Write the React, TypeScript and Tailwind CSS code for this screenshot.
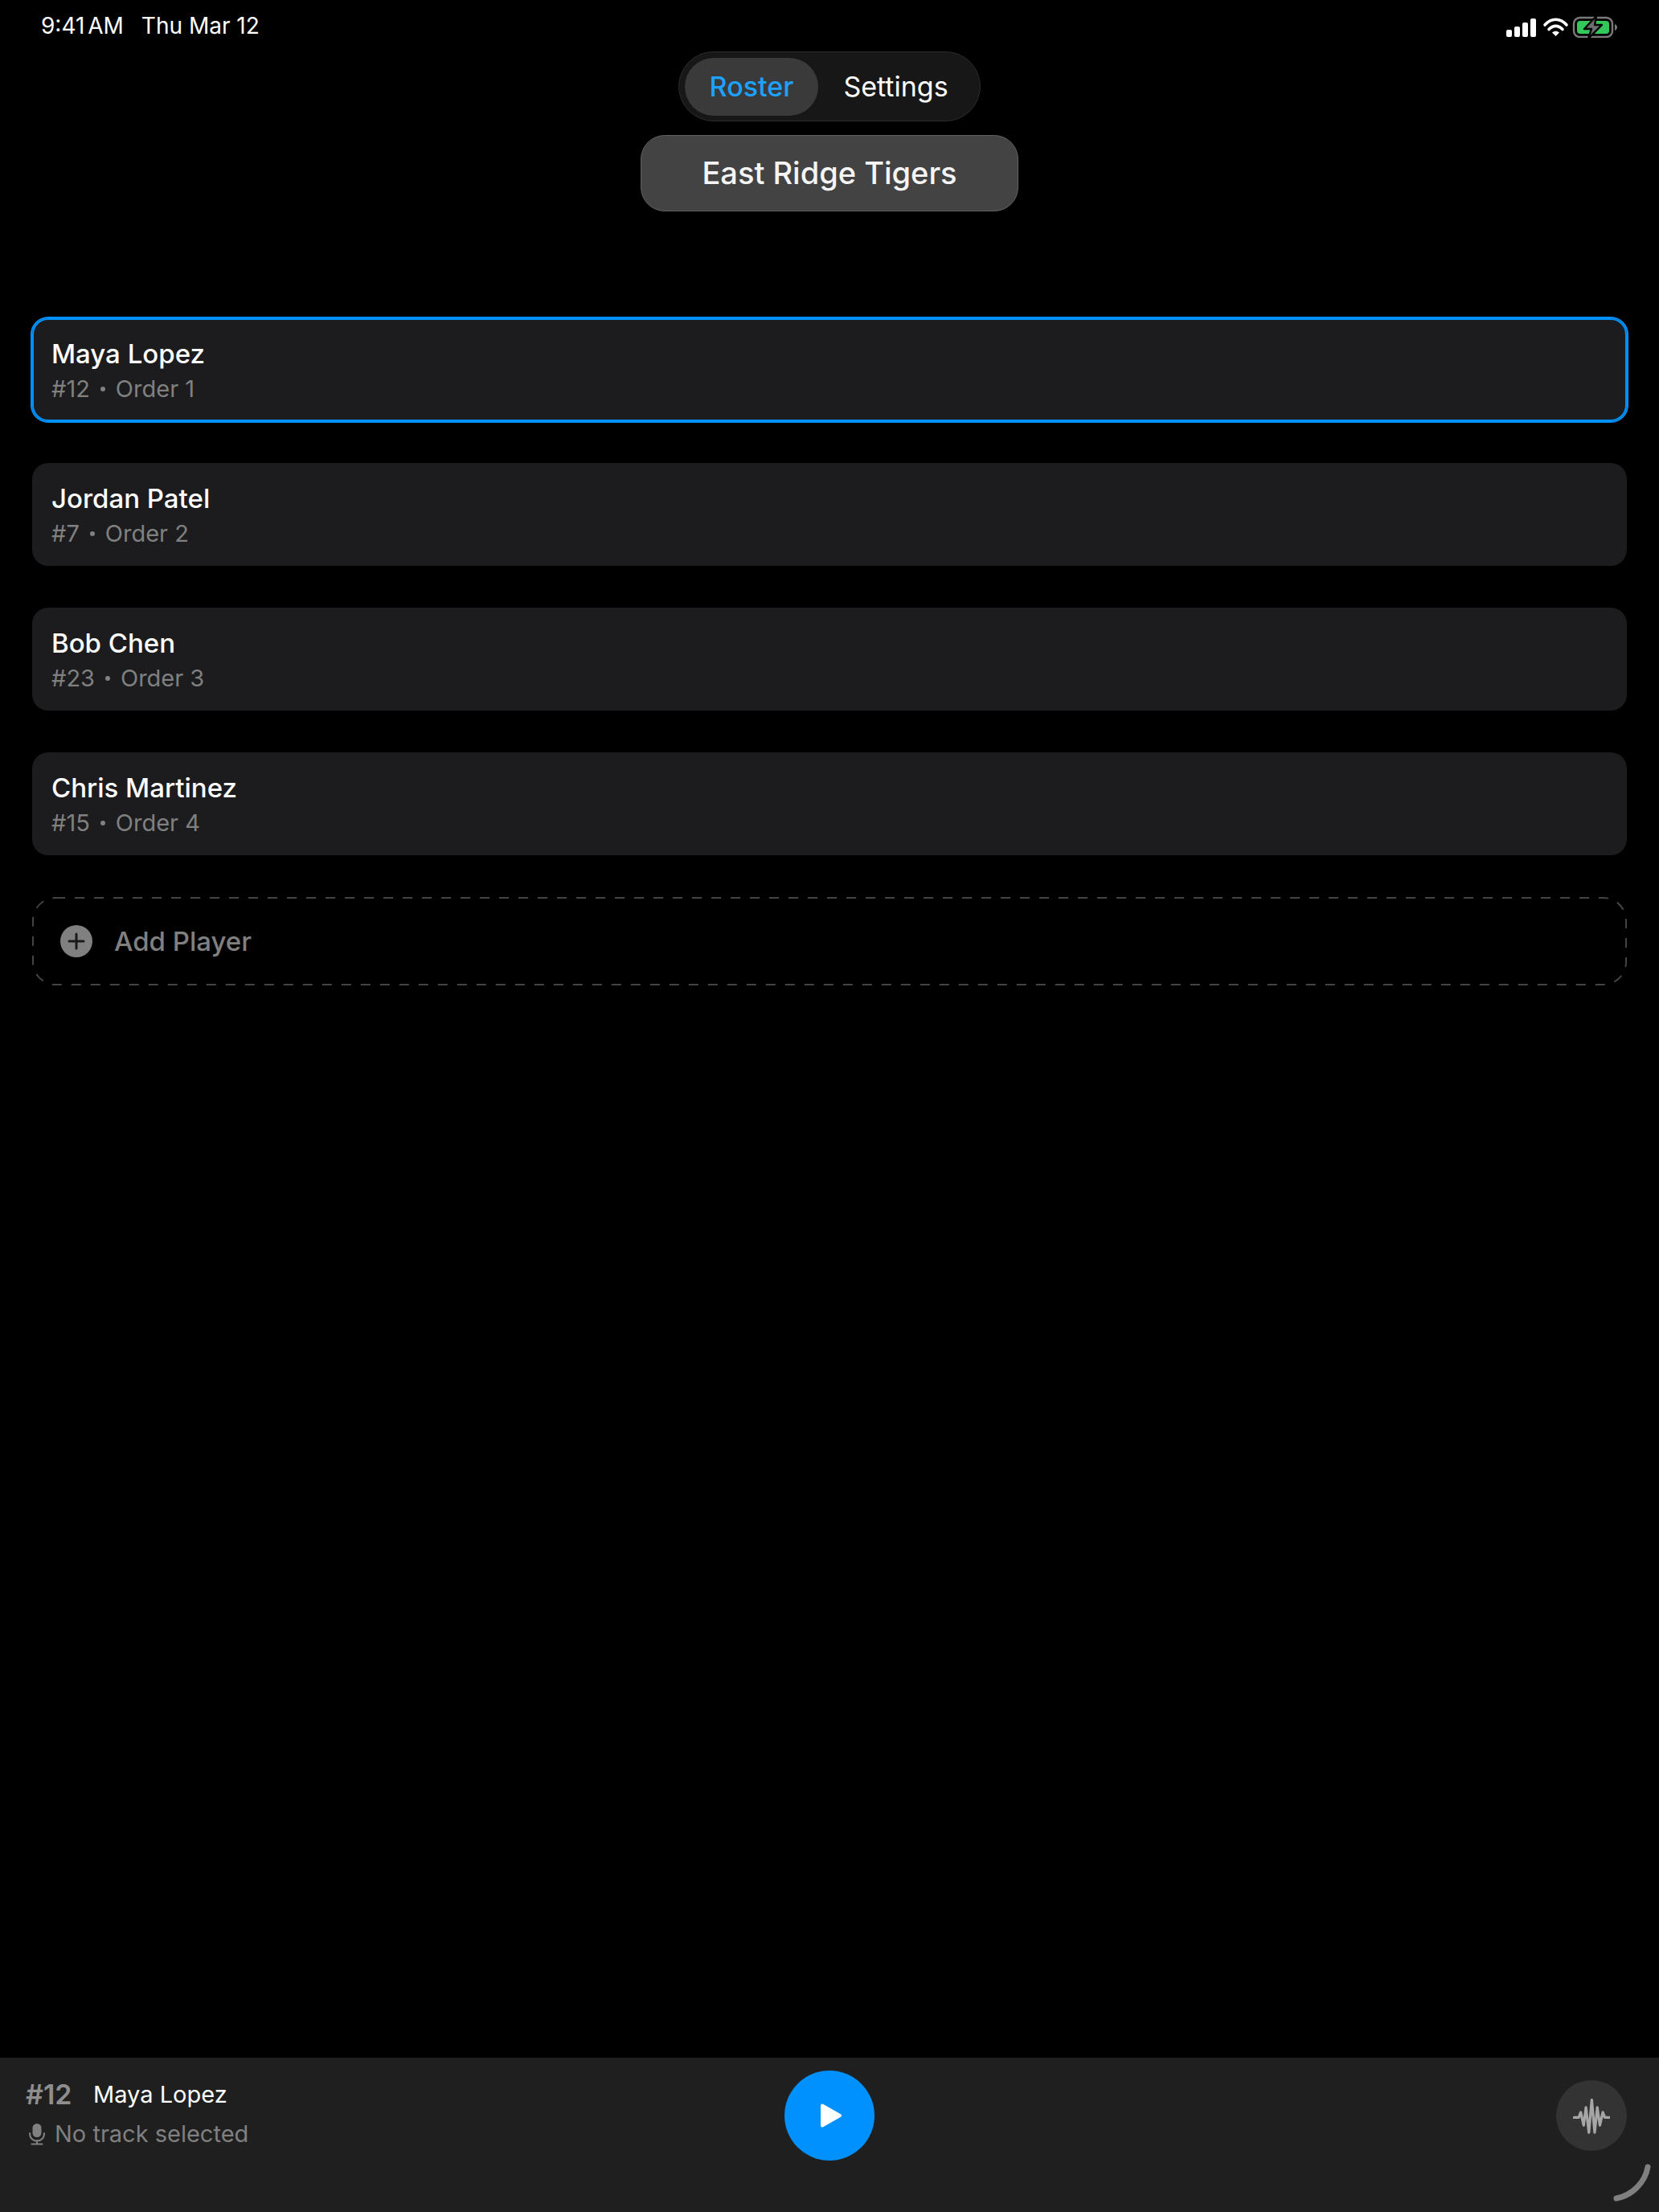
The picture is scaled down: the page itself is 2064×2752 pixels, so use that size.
const players = [
  { name: 'Maya Lopez', number: 12, order: 1, selected: true },
  { name: 'Jordan Patel', number: 7, order: 2, selected: false },
  { name: 'Bob Chen', number: 23, order: 3, selected: false },
  { name: 'Chris Martinez', number: 15, order: 4, selected: false },
]

function StatusIcons() {
  return (
    <svg width="140" height="30" viewBox="0 0 140 30" className="block">
      {/* signal */}
      <rect x="0" y="20" width="7" height="9" rx="2" fill="#fff" />
      <rect x="10" y="16" width="7" height="13" rx="2" fill="#fff" />
      <rect x="20" y="11" width="7" height="18" rx="2" fill="#fff" />
      <rect x="30" y="6" width="7" height="23" rx="2" fill="#fff" />
      {/* wifi */}
      <path d="M48 14 C56 5 67 5 75 14" fill="none" stroke="#fff" strokeWidth="3.6" strokeLinecap="round" />
      <path d="M53 19.5 C58 14 65 14 70 19.5" fill="none" stroke="#fff" strokeWidth="3.6" strokeLinecap="round" />
      <path d="M61.5 28 L57 23.5 C60 21 63 21 66 23.5 Z" fill="#fff" />
      {/* battery */}
      <rect x="84" y="5" width="48" height="24" rx="7.5" fill="none" stroke="#7a7a7a" strokeWidth="2.4" />
      <rect x="88" y="9" width="40" height="16" rx="4" fill="#34c759" />
      <path d="M135 13 C137 14 138 15.5 138 17 C138 18.5 137 20 135 21 Z" fill="#7a7a7a" />
      <path d="M112 3 L97 19 L106 19 L102 31 L119 14 L110 14 Z" fill="#6e6e6e" stroke="#000" strokeWidth="2.4" strokeLinejoin="round" />
    </svg>
  )
}

function PlayerCard({ name, number, order, selected }: (typeof players)[number]) {
  return (
    <div
      className={`h-32 rounded-[20px] bg-[#1c1c1e] px-6 pt-[22px] ${
        selected ? 'shadow-[0_0_0_2px_#0091ff,inset_0_0_0_2px_#0091ff]' : ''
      }`}
    >
      <div className="text-[33px] leading-[44px] font-medium text-white">{name}</div>
      <div className="mt-[2px] flex items-center text-[29px] leading-[40px] text-[#808080]">
        #{number}
        <span className="mx-[13px] h-[6px] w-[6px] rounded-full bg-[#808080]" />
        Order {order}
      </div>
    </div>
  )
}

export default function App() {
  return (
    <div className="flex h-[2752px] w-[2064px] flex-col overflow-hidden bg-black font-['Inter',sans-serif] text-white">
      {/* Status bar */}
      <div className="flex h-16 items-center justify-between pr-[50px] pl-[51px] text-[28px]">
        <div className="flex gap-[22px]">
          <span className="[word-spacing:-4px]">9:41 AM</span>
          <span>Thu Mar 12</span>
        </div>
        <StatusIcons />
      </div>

      {/* Tabs */}
      <div className="flex flex-col items-center">
        <div className="flex h-[87px] w-[376px] items-center rounded-full border border-[#2c2c2c] bg-[#171717] pl-[7px] text-[34px]">
          <div className="flex h-[72px] w-[166px] items-center justify-center rounded-full bg-[#3a3a3a] font-medium text-[#1ea1ff]">
            Roster
          </div>
          <div className="flex-1 pr-[8px] text-center">Settings</div>
        </div>
        <div className="mt-[17px] flex h-[95px] w-[470px] items-center justify-center rounded-[30px] border-[1.5px] border-[#616161] bg-[#434343] text-[38px] font-medium text-[#f5f5f5]">
          East Ridge Tigers
        </div>
      </div>

      {/* Roster */}
      <div className="mt-[133px] flex flex-col gap-[52px] px-10">
        {players.map((p) => (
          <PlayerCard key={p.name} {...p} />
        ))}
        <div className="relative flex h-[110px] items-center pl-[35px]">
          <svg width="1984" height="110" viewBox="0 0 1984 110" className="absolute inset-0">
            <rect x="1" y="1" width="1982" height="108" rx="28" fill="none" stroke="#444444" strokeWidth="2" strokeDasharray="12 12" />
          </svg>
          <svg width="40" height="40" viewBox="0 0 40 40">
            <circle cx="20" cy="20" r="20" fill="#808080" />
            <path d="M20 11 V29 M11 20 H29" stroke="#1a1a1a" strokeWidth="3" strokeLinecap="round" />
          </svg>
          <span className="ml-[27px] pt-[2px] text-[33px] font-medium text-[#808080]">Add Player</span>
        </div>
      </div>

      {/* Now playing */}
      <div className="relative mt-auto grid h-[192px] grid-cols-[1fr_auto_1fr] items-start bg-[#1f1f1f] px-8 pt-4">
        <div className="pt-2">
          <div className="flex items-center leading-[44px]">
            <span className="w-[84px] text-[34px] font-semibold text-[#8e8e8e]">#12</span>
            <span className="text-[29px] text-white">Maya Lopez</span>
          </div>
          <div className="mt-[5px] flex items-center gap-[11px] text-[29px] leading-[44px] text-[#808080]">
            <svg width="22" height="28" viewBox="0 0 22 28" className="ml-[3px]">
              <rect x="5.5" y="1" width="11" height="17" rx="5.5" fill="#808080" />
              <path d="M2 13 C2 26 20 26 20 13 M11 22 V26 M4.5 26.5 H17.5" fill="none" stroke="#808080" strokeWidth="2" strokeLinecap="round" />
            </svg>
            <span>No track selected</span>
          </div>
        </div>

        <div className="flex h-28 w-28 items-center justify-center rounded-full bg-[#0091ff]">
          <svg width="30" height="32" viewBox="0 0 30 32" className="ml-[4px]">
            <path d="M4 3.5 L26 16 L4 28.5 Z" fill="#fff" stroke="#fff" strokeWidth="4" strokeLinejoin="round" />
          </svg>
        </div>

        <div className="mt-3 mr-2 flex h-[88px] w-[88px] items-center justify-center justify-self-end rounded-full bg-[#333333]">
          <svg width="46" height="44" viewBox="284 218 126 122" className="mt-[2px]">
            <path
              d="M287 283 H303 L310 265 L320 310 L328 248 L338 335 L348 222 L358 335 L367 248 L376 310 L386 265 L393 283 H408"
              fill="none"
              stroke="#a6a6a6"
              strokeWidth="9"
              strokeLinecap="round"
              strokeLinejoin="round"
            />
          </svg>
        </div>

        {/* resize handle */}
        <svg width="50" height="50" viewBox="0 0 50 50" className="absolute right-[8px] bottom-[10px]">
          <path d="M44 4 C41 22 26 39 5 43" fill="none" stroke="#808080" strokeWidth="7" strokeLinecap="round" />
        </svg>
      </div>
    </div>
  )
}
